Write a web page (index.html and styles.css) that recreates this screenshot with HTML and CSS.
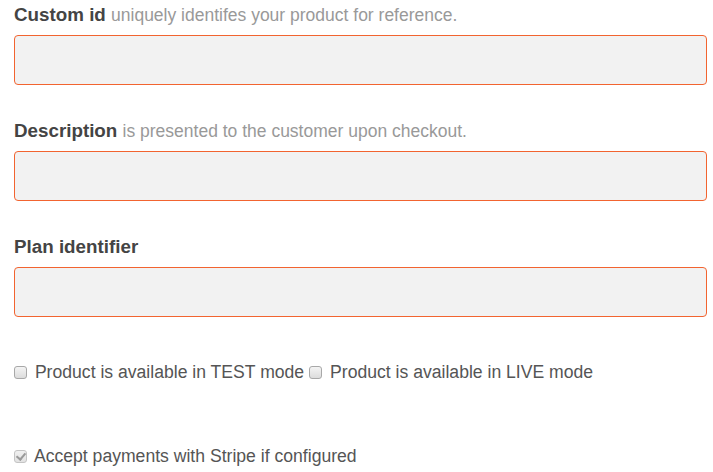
FILE: index.html
```html
<!DOCTYPE html>
<html>
<head>
<meta charset="utf-8">
<link rel="stylesheet" href="styles.css">
</head>
<body>
<form class="form">
  <div class="group">
    <label class="label"><strong>Custom id</strong> <span class="hint">uniquely identifes your product for reference.</span></label>
    <input class="field" type="text">
  </div>
  <div class="group">
    <label class="label"><strong>Description</strong> <span class="hint">is presented to the customer upon checkout.</span></label>
    <input class="field" type="text">
  </div>
  <div class="group">
    <label class="label"><strong>Plan identifier</strong></label>
    <input class="field" type="text">
  </div>
  <div class="checks">
    <label class="check"><input type="checkbox" class="box"> Product is available in TEST mode</label>
    <label class="check"><input type="checkbox" class="box"> Product is available in LIVE mode</label>
  </div>
  <div class="checks stripe">
    <label class="check"><input type="checkbox" class="box" checked disabled> Accept payments with Stripe if configured</label>
  </div>
</form>
</body>
</html>
```
FILE: styles.css
```css
html, body {
  margin: 0;
  padding: 0;
  background: #fff;
}
body {
  font-family: "Liberation Sans", Arial, sans-serif;
  color: #555;
}
.form {
  padding: 0 6px 0 14px;
}
.group {
  margin-bottom: 31px;
}
.label {
  display: block;
  font-size: 18.8px;
  line-height: 30px;
  margin-bottom: 5px;
  color: #444;
}
.label strong {
  font-weight: bold;
}
.hint {
  font-size: 17.5px;
  color: #999;
}
.field {
  display: block;
  box-sizing: border-box;
  width: 693px;
  height: 50px;
  margin: 0;
  border: 1px solid #f26430;
  border-radius: 4px;
  background: #f2f2f2;
  outline: none;
}
.checks {
  display: flex;
  gap: 5px;
  margin-top: 44px;
  line-height: 22px;
}
.stripe {
  margin-top: 62px;
}
.check {
  display: flex;
  align-items: center;
  font-size: 17.6px;
  color: #555;
  white-space: pre;
}
.box {
  appearance: none;
  -webkit-appearance: none;
  box-sizing: border-box;
  width: 13px;
  height: 13px;
  margin: 0 3px 0 0;
  border: 1px solid #a8a8a8;
  border-radius: 3px;
  background: linear-gradient(#f4f4f4, #dcdcdc);
  position: relative;
}
.box:checked::after {
  content: "";
  position: absolute;
  left: 3px;
  top: 0px;
  width: 4px;
  height: 7px;
  border: solid #9a9a9a;
  border-width: 0 2px 2px 0;
  transform: rotate(40deg);
}
.box:disabled {
  border-color: #c4c4c4;
  background: linear-gradient(#f0f0f0, #e2e2e2);
}
```
